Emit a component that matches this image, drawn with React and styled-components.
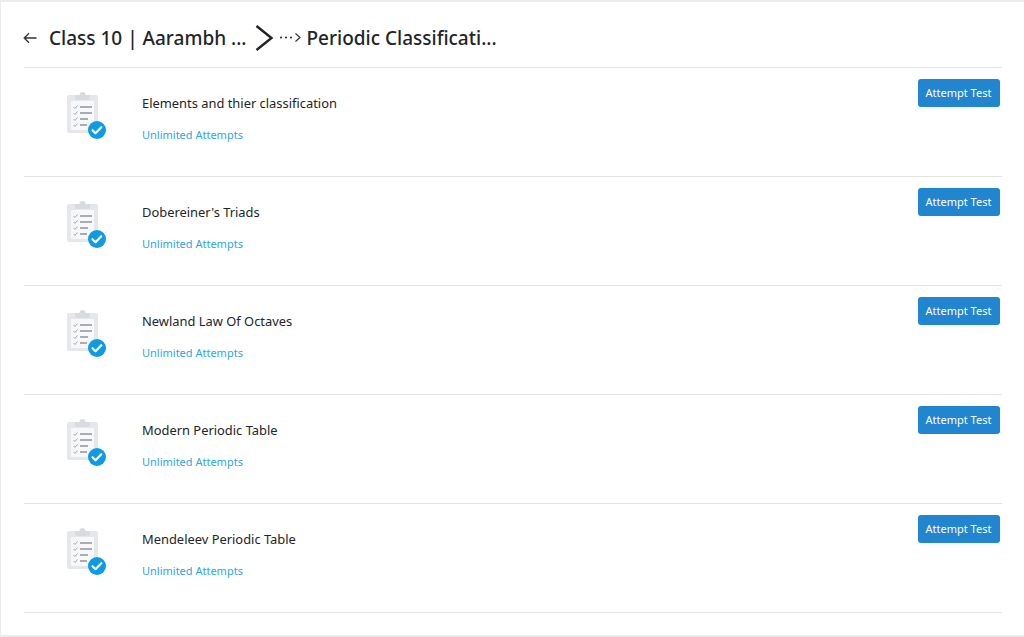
import React from "react";
import styled, { createGlobalStyle } from "styled-components";

const Global = createGlobalStyle`
  html, body { margin: 0; padding: 0; background: #ececec; }
  body { font-family: "Noto Sans", "Open Sans", sans-serif; }
`;

const Panel = styled.main`
  width: 1023px;
  height: 633px;
  margin: 2px 0 0 1px;
  background: #fff;
  box-sizing: border-box;
  padding: 0 22px 0 23px;
`;

const Header = styled.header`
  height: 66px;
  box-sizing: border-box;
  border-bottom: 1px solid #e3e3e3;
  display: flex;
  align-items: center;
  padding-top: 7px;
  color: #212529;
`;

const BackIcon = styled.svg`
  width: 14px;
  height: 12px;
  margin: 0 12px 0 -1px;
  flex: none;
`;

const Crumb = styled.span`
  font-size: 19px;
  font-weight: 500;
  white-space: nowrap;
  line-height: 26px;
`;

const Chevron = styled.svg`
  width: 19px;
  height: 26px;
  margin: 0 5px 0 8px;
  flex: none;
`;

const Dots = styled.svg`
  width: 22px;
  height: 12px;
  margin-right: 6px;
  flex: none;
`;

const Row = styled.section`
  height: 109px;
  box-sizing: border-box;
  border-bottom: 1px solid #e3e3e3;
  display: flex;
  align-items: flex-start;
`;

const IconCell = styled.div`
  width: 118px;
  flex: none;
  padding: 23px 0 0 43px;
  box-sizing: border-box;
`;

const Info = styled.div`
  flex: 1;
  padding-top: 26px;
`;

const Title = styled.div`
  font-size: 12.9px;
  line-height: 18px;
  color: #212529;
`;

const Attempts = styled.div`
  font-size: 11px;
  line-height: 16px;
  margin-top: 15px;
  color: #2fa5e4;
`;

const Button = styled.button`
  width: 82px;
  height: 28px;
  margin: 11px 2px 0 0;
  border: none;
  border-radius: 3px;
  background: #2185d0;
  color: #fff;
  font: 11px "Noto Sans", "Open Sans", sans-serif;
  padding: 0 1px 2px 0;
`;

const IconSvg = styled.svg`
  display: block;
`;

const lineWidths = [12, 12, 8, 7];

const TestIcon = () => (
  <IconSvg width="42" height="48" viewBox="0 0 42 48">
    <rect x="0" y="4" width="31" height="38" rx="2" fill="#e5e7ea" />
    <rect x="4" y="10" width="23" height="29" fill="#f7f8f9" />
    <path d="M8 7 V4 H12.5 A3 3 0 0 1 18.5 4 H23 V7 Q23 9 21 9 H10 Q8 9 8 7Z" fill="#d9dcdf" />
    {[16, 22, 28, 34].map((y, i) => (
      <g key={y}>
        <path d={`M6.5 ${y} l1.5 1.5 l2.5 -3`} fill="none" stroke="#a4a9ae" strokeWidth="1" />
        <rect x="13" y={y - 1} width={lineWidths[i]} height="2" fill="#a9adb2" />
      </g>
    ))}
    <circle cx="30" cy="39" r="9" fill="#0f9be3" />
    <path d="M25.5 39.2 l3 3 l5.8 -6" fill="none" stroke="#fff" strokeWidth="2.2" strokeLinecap="round" strokeLinejoin="round" />
  </IconSvg>
);

const tests = [
  "Elements and thier classification",
  "Dobereiner's Triads",
  "Newland Law Of Octaves",
  "Modern Periodic Table",
  "Mendeleev Periodic Table",
];

export default function App() {
  return (
    <>
      <Global />
      <Panel>
        <Header>
          <BackIcon viewBox="0 0 14 12">
            <path d="M13.5 6 H1.5 M6 1.2 L1.2 6 L6 10.8" fill="none" stroke="#333" strokeWidth="1.3" />
          </BackIcon>
          <Crumb>Class 10 | Aarambh ...</Crumb>
          <Chevron viewBox="0 0 19 26">
            <path d="M1.5 1 L16.5 13 L1.5 25" fill="none" stroke="#222" strokeWidth="2.4" />
          </Chevron>
          <Dots viewBox="0 0 22 12">
            <circle cx="2" cy="5.5" r="1.1" fill="#333" />
            <circle cx="7" cy="5.5" r="1.1" fill="#333" />
            <circle cx="12" cy="5.5" r="1.1" fill="#333" />
            <path d="M16.5 1.5 L21 5.5 L16.5 9.5" fill="none" stroke="#333" strokeWidth="1.2" />
          </Dots>
          <Crumb>Periodic Classificati...</Crumb>
        </Header>
        {tests.map((t) => (
          <Row key={t}>
            <IconCell>
              <TestIcon />
            </IconCell>
            <Info>
              <Title>{t}</Title>
              <Attempts>Unlimited Attempts</Attempts>
            </Info>
            <Button>Attempt Test</Button>
          </Row>
        ))}
      </Panel>
    </>
  );
}
